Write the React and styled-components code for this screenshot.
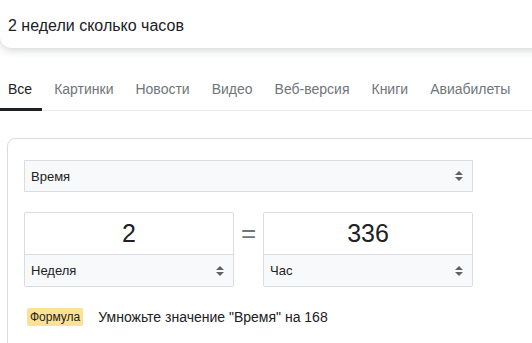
import React from 'react';
import styled, { createGlobalStyle } from 'styled-components';

const Global = createGlobalStyle`
  html, body {
    margin: 0;
    padding: 0;
    background: #fff;
    overflow: hidden;
    font-family: "Liberation Sans", Arial, sans-serif;
    color: #202124;
  }
`;

const Page = styled.div`
  width: 532px;
  height: 343px;
  overflow: hidden;
`;

const SearchBar = styled.div`
  height: 50px;
  box-sizing: border-box;
  margin-right: -40px;
  margin-top: -2px;
  padding: 5px 0 0 8px;
  display: flex;
  align-items: center;
  background: #fff;
  border-radius: 0 0 12px 12px;
  box-shadow: 0 2px 8px rgba(32, 33, 36, 0.2);
  font-size: 16px;
`;

const Tabs = styled.nav`
  display: flex;
  border-bottom: 1px solid #e8eaed;
  height: 63px;
  box-sizing: border-box;
`;

const Tab = styled.div`
  position: relative;
  flex-shrink: 0;
  white-space: nowrap;
  padding: 33px 0 0;
  margin: 0 22px 0 0;
  font-size: 14px;
  line-height: 16px;
  color: ${(p) => (p.$active ? '#202124' : '#70757a')};
  &:first-child {
    padding-left: 8px;
    padding-right: 10px;
    margin-right: 12px;
  }
  ${(p) =>
    p.$active &&
    `&::after {
      content: '';
      position: absolute;
      left: 0;
      right: 0;
      bottom: -1px;
      height: 3px;
      background: #202124;
    }`}
`;

const Card = styled.section`
  margin: 27px -60px 0 7px;
  border: 1px solid #dadce0;
  border-radius: 8px;
  padding: 21px 16px 20px;
  height: 260px;
`;

const Column = styled.div`
  width: 449px;
`;

const Select = styled.div`
  display: flex;
  align-items: center;
  justify-content: space-between;
  height: 32px;
  box-sizing: border-box;
  padding: 0 9px 0 6px;
  background: #f8f9fa;
  border: 1px solid #dadce0;
  font-size: 13px;
  color: #202124;
`;

const Converter = styled.div`
  display: grid;
  grid-template-columns: 210px 1fr 210px;
  align-items: start;
  margin-top: 20px;
`;

const Box = styled.div`
  border: 1px solid #dadce0;
  border-radius: 2px;
  overflow: hidden;
`;

const Value = styled.div`
  height: 41px;
  display: flex;
  align-items: center;
  justify-content: center;
  font-size: 25px;
  color: #202124;
  background: #fff;
  border-bottom: 1px solid #dadce0;
`;

const UnitSelect = styled(Select)`
  border: 0;
  height: 31px;
  padding-left: 6px;
`;

const Equals = styled.div`
  text-align: center;
  font-size: 26px;
  color: #70757a;
  line-height: 42px;
`;

const FormulaRow = styled.div`
  display: flex;
  align-items: center;
  margin-top: 21px;
  padding-left: 3px;
  font-size: 14px;
`;

const Badge = styled.span`
  background: #fde293;
  border-radius: 2px;
  padding: 2px 3px;
  font-size: 12px;
  color: #202124;
  margin-right: 15px;
`;

function Arrows() {
  return (
    <svg width="8" height="10" viewBox="0 0 8 10" fill="#5f6368">
      <polygon points="0,4 4,0 8,4" />
      <polygon points="0,6 4,10 8,6" />
    </svg>
  );
}

const tabs = ['Все', 'Картинки', 'Новости', 'Видео', 'Веб-версия', 'Книги', 'Авиабилеты'];

export default function App() {
  return (
    <Page>
      <Global />
      <SearchBar>2 недели сколько часов</SearchBar>
      <Tabs>
        {tabs.map((t, i) => (
          <Tab key={t} $active={i === 0}>
            {t}
          </Tab>
        ))}
      </Tabs>
      <Card>
        <Column>
          <Select>
            <span>Время</span>
            <Arrows />
          </Select>
          <Converter>
            <Box>
              <Value>2</Value>
              <UnitSelect>
                <span>Неделя</span>
                <Arrows />
              </UnitSelect>
            </Box>
            <Equals>=</Equals>
            <Box>
              <Value>336</Value>
              <UnitSelect>
                <span>Час</span>
                <Arrows />
              </UnitSelect>
            </Box>
          </Converter>
          <FormulaRow>
            <Badge>Формула</Badge>
            <span>Умножьте значение "Время" на 168</span>
          </FormulaRow>
        </Column>
      </Card>
    </Page>
  );
}
